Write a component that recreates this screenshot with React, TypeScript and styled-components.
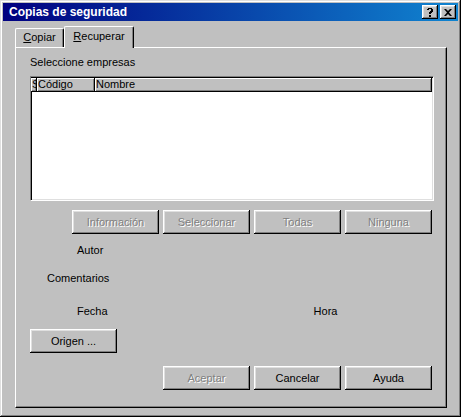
import React from 'react';
import styled, { createGlobalStyle } from 'styled-components';

const GlobalStyle = createGlobalStyle`
  html, body {
    margin: 0;
    padding: 0;
    background: #c0c0c0;
  }
  * {
    box-sizing: border-box;
  }
`;

const Window = styled.div`
  width: 461px;
  height: 417px;
  padding: 3px;
  background: #c0c0c0;
  font-family: "Liberation Sans", Arial, sans-serif;
  font-size: 11px;
  color: #000;
  box-shadow: inset -1px -1px #000, inset 1px 1px #dfdfdf, inset -2px -2px #808080, inset 2px 2px #fff;
  display: flex;
  flex-direction: column;
`;

const TitleBar = styled.div`
  height: 18px;
  display: flex;
  align-items: center;
  padding: 0 2px 0 6px;
  background: linear-gradient(to right, #000080, #1084d0);
`;

const Title = styled.div`
  flex: 1;
  color: #fff;
  font-weight: bold;
  font-size: 12px;
`;

const TitleButton = styled.div`
  width: 16px;
  height: 14px;
  margin-left: 2px;
  background: #c0c0c0;
  box-shadow: inset -1px -1px #000, inset 1px 1px #fff, inset -2px -2px #808080, inset 2px 2px #dfdfdf;
  display: flex;
  align-items: center;
  justify-content: center;
`;

const Body = styled.div`
  flex: 1;
  padding: 5px 11px 0 12px;
  display: flex;
  flex-direction: column;
`;

const TabStrip = styled.div`
  height: 21px;
  display: flex;
  align-items: flex-end;
  position: relative;
  z-index: 1;
`;

const Tab = styled.div<{ $active?: boolean }>`
  height: ${p => (p.$active ? '22px' : '19px')};
  width: ${p => (p.$active ? '70px' : '49px')};
  margin-bottom: ${p => (p.$active ? '-1px' : '0')};
  background: #c0c0c0;
  border-top: 1px solid #fff;
  border-left: 1px solid #fff;
  border-right: 1px solid #000;
  border-radius: 2px 2px 0 0;
  box-shadow: inset -1px 0 #808080;
  display: flex;
  justify-content: center;
  padding-top: ${p => (p.$active ? '3px' : '2px')};
  u {
    text-decoration: underline;
  }
`;

const Panel = styled.div`
  height: 361px;
  border-top: 1px solid #fff;
  border-left: 1px solid #fff;
  border-right: 1px solid #000;
  border-bottom: 1px solid #000;
  box-shadow: inset -1px -1px #808080;
  padding: 8px 0 0 14px;
  display: flex;
  flex-direction: column;
`;

const Caption = styled.div`
  line-height: 13px;
  height: 13px;
`;

const ListBox = styled.div`
  margin-top: 7px;
  width: 404px;
  height: 125px;
  background: #fff;
  border-top: 1px solid #808080;
  border-left: 1px solid #808080;
  border-right: 1px solid #fff;
  border-bottom: 1px solid #fff;
  box-shadow: inset 1px 1px #000, inset -1px -1px #dfdfdf;
  padding: 1px 1px 1px 0;
  display: flex;
  flex-direction: column;
`;

const HeaderRow = styled.div`
  display: flex;
  height: 14px;
  background: #c0c0c0;
`;

const HeaderCell = styled.div<{ $w?: number }>`
  flex: ${p => (p.$w ? `0 0 ${p.$w}px` : '1')};
  overflow: hidden;
  white-space: nowrap;
  padding-left: 1px;
  line-height: 13px;
  box-shadow: inset -1px -1px #000, inset 1px 1px #fff, inset -2px -2px #808080;
`;

const ButtonRow = styled.div<{ $top: number; $left: number }>`
  display: flex;
  gap: 4px;
  margin-top: ${p => p.$top}px;
  margin-left: ${p => p.$left}px;
`;

const Button = styled.div<{ $disabled?: boolean }>`
  width: 87px;
  height: 24px;
  display: flex;
  align-items: center;
  justify-content: center;
  background: #c0c0c0;
  box-shadow: inset -1px -1px #000, inset 1px 1px #fff, inset -2px -2px #808080, inset 2px 2px #dfdfdf;
  color: ${p => (p.$disabled ? '#808080' : '#000')};
  text-shadow: ${p => (p.$disabled ? '1px 1px #fff' : 'none')};
`;

const FieldRow = styled.div<{ $top: number }>`
  display: flex;
  margin-top: ${p => p.$top}px;
  line-height: 13px;
  height: 13px;
`;

const Field = styled.div<{ $left: number }>`
  margin-left: ${p => p.$left}px;
`;

const App: React.FC = () => {
  return (
    <>
      <GlobalStyle />
      <Window>
        <TitleBar>
          <Title>Copias de seguridad</Title>
          <TitleButton>
            <svg width="8" height="9" viewBox="0 0 8 9">
              <path d="M1 1h1V0h4v1h1v3H6v1H5v1H3V4h1V3h1V1H3v1H1z M3 7h2v2H3z" fill="#000" />
            </svg>
          </TitleButton>
          <TitleButton>
            <svg width="8" height="7" viewBox="0 0 8 7">
              <path d="M0 0h2l2 2 2-2h2L5 3.5 8 7H6L4 5 2 7H0l3-3.5z" fill="#000" />
            </svg>
          </TitleButton>
        </TitleBar>
        <Body>
          <TabStrip>
            <Tab>
              <span><u>C</u>opiar</span>
            </Tab>
            <Tab $active>
              <span><u>R</u>ecuperar</span>
            </Tab>
          </TabStrip>
          <Panel>
            <Caption>Seleccione empresas</Caption>
            <ListBox>
              <HeaderRow>
                <HeaderCell $w={6}>Se</HeaderCell>
                <HeaderCell $w={58}>Código</HeaderCell>
                <HeaderCell>Nombre</HeaderCell>
              </HeaderRow>
            </ListBox>
            <ButtonRow $top={9} $left={42}>
              <Button $disabled>Información</Button>
              <Button $disabled>Seleccionar</Button>
              <Button $disabled>Todas</Button>
              <Button $disabled>Ninguna</Button>
            </ButtonRow>
            <FieldRow $top={10}>
              <Field $left={47}>Autor</Field>
            </FieldRow>
            <FieldRow $top={15}>
              <Field $left={17}>Comentarios</Field>
            </FieldRow>
            <FieldRow $top={20}>
              <Field $left={47}>Fecha</Field>
              <Field $left={206}>Hora</Field>
            </FieldRow>
            <ButtonRow $top={11} $left={0}>
              <Button>Origen ...</Button>
            </ButtonRow>
            <ButtonRow $top={13} $left={133}>
              <Button $disabled>Aceptar</Button>
              <Button>Cancelar</Button>
              <Button>Ayuda</Button>
            </ButtonRow>
          </Panel>
        </Body>
      </Window>
    </>
  );
};

export default App;
